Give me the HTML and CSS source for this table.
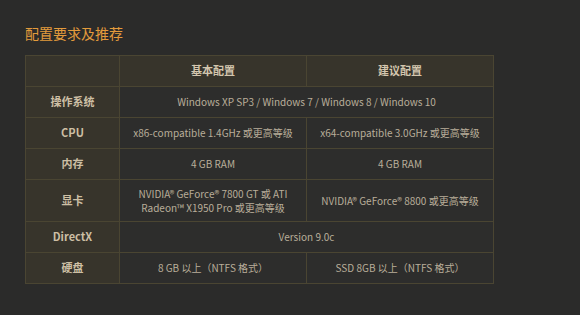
FILE: index.html
```html
<!DOCTYPE html>
<html lang="zh">
<head>
<meta charset="utf-8">
<link rel="stylesheet" href="styles.css">
</head>
<body>
<div class="page">
  <h2 class="title">配置要求及推荐</h2>
  <table class="spec">
    <colgroup><col class="c1"><col class="c2"><col class="c3"></colgroup>
    <tr class="head"><th class="lab"></th><th>基本配置</th><th>建议配置</th></tr>
    <tr><th class="lab">操作系统</th><td colspan="2">Windows XP SP3 / Windows 7 / Windows 8 / Windows 10</td></tr>
    <tr><th class="lab">CPU</th><td>x86-compatible 1.4GHz 或更高等级</td><td>x64-compatible 3.0GHz 或更高等级</td></tr>
    <tr><th class="lab">内存</th><td>4 GB RAM</td><td>4 GB RAM</td></tr>
    <tr class="tall"><th class="lab">显卡</th><td>NVIDIA® GeForce® 7800 GT 或 ATI<br>Radeon™ X1950 Pro 或更高等级</td><td>NVIDIA® GeForce® 8800 或更高等级</td></tr>
    <tr><th class="lab">DirectX</th><td colspan="2">Version 9.0c</td></tr>
    <tr><th class="lab">硬盘</th><td>8 GB 以上（NTFS 格式）</td><td>SSD 8GB 以上（NTFS 格式）</td></tr>
  </table>
</div>
</body>
</html>
```
FILE: styles.css
```css
html, body {
  margin: 0;
  padding: 0;
  background: #2b2b2a;
}
.page {
  padding: 23px 0 0 25px;
  font-family: "Noto Sans CJK SC", "Noto Sans", sans-serif;
}
.title {
  margin: 0 0 12px 0;
  font-size: 14px;
  line-height: 20px;
  font-weight: normal;
  color: #e39b3c;
}
.spec {
  border-collapse: collapse;
  table-layout: fixed;
  width: 469px;
}
.c1 { width: 94px; }
.c2 { width: 187px; }
.c3 { width: 187px; }
.spec th, .spec td {
  border: 1px solid #4a4532;
  height: 30px;
  padding: 0;
  text-align: center;
  vertical-align: middle;
  font-size: 10px;
  line-height: 13.5px;
}
.spec tr.tall td, .spec tr.tall th { height: 41px; }
.spec td {
  background: #2d2d2c;
  color: #b9ae9a;
}
.spec th {
  background: #37342b;
  color: #cdbfa4;
  font-weight: bold;
  font-size: 11px;
}
.spec tr.head th {
  color: #d3c6ae;
}
```
